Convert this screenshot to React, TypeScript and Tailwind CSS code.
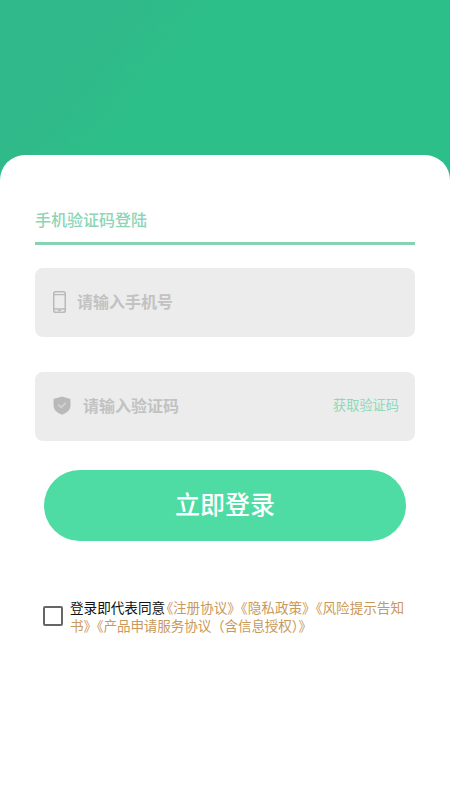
const CJK = "font-['Noto_Sans_CJK_SC','Noto_Sans',sans-serif]";

function PhoneIcon() {
  return (
    <svg width="13" height="22" viewBox="0 0 13 22" fill="none" className="shrink-0">
      <rect x="0.75" y="0.75" width="11.5" height="20.5" rx="1.8" stroke="#b9b9b9" strokeWidth="1.5" />
      <path d="M1 3.6h11M1 18h11" stroke="#b9b9b9" strokeWidth="1.3" />
      <rect x="5" y="18.8" width="3" height="1.2" fill="#b9b9b9" />
    </svg>
  );
}

function ShieldIcon() {
  return (
    <svg width="18" height="19" viewBox="0 0 18 19" className="shrink-0">
      <path d="M9 0.5 L17.5 3 V9.5 C17.5 14 13.5 17 9 18.8 C4.5 17 0.5 14 0.5 9.5 V3 Z" fill="#b9b9b9" />
      <path d="M5.4 8.8 L8.2 11.4 L12.8 6.8" fill="none" stroke="#d4d4d4" strokeWidth="1.6" />
    </svg>
  );
}

export default function App() {
  return (
    <div className={`${CJK} w-[450px] h-[800px] overflow-hidden flex flex-col pt-[155px] bg-[linear-gradient(128deg,#30b98a_0%,#30ba8a_14%,#2dbf89_20%,#2dbf89_60%,#2fbb88_72%,#30b789_100%)]`}>
      <div className="flex-1 bg-white rounded-t-[25px] px-[35px] flex flex-col">
        {/* Tab */}
        <div className="h-[90px] border-b-[3px] border-[#86d3b2] flex items-end pb-[11px]">
          <span className="text-[16px] leading-[24px] font-medium text-[#8dd5b5]">手机验证码登陆</span>
        </div>

        {/* Inputs */}
        <div className="mt-[23px] h-[69px] rounded-[8px] bg-[#ececec] flex items-center pl-[18px] pb-[2px]">
          <PhoneIcon />
          <span className="ml-[11px] mb-[2px] text-[16px] font-bold text-[#c2c2c2]">请输入手机号</span>
        </div>
        <div className="mt-[35px] h-[69px] rounded-[8px] bg-[#ececec] flex items-center pl-[18px] pr-[16px] pb-[2px]">
          <ShieldIcon />
          <span className="ml-[12px] mb-[2px] text-[16px] font-bold text-[#c2c2c2]">请输入验证码</span>
          <span className="ml-auto mb-[2px] text-[13.2px] text-[#8dd8b7]">获取验证码</span>
        </div>

        {/* Submit */}
        <button className="mt-[29px] mx-[9px] h-[71px] pb-[3px] rounded-full bg-[#4edca4] text-white text-[25px] font-medium">
          立即登录
        </button>

        {/* Agreement */}
        <div className="mt-[57px] ml-[8px] flex items-start">
          <div className="mt-[8px] w-[20px] h-[20px] shrink-0 rounded-[2px] border-2 border-[#666666]" />
          <div className="ml-[7px] w-[340px] text-[13.6px] leading-[18px] text-[#111111]">
            <p className="whitespace-nowrap">
              登录即代表同意
              <span className="ml-[1px] text-[#c9995c] [font-feature-settings:'palt']">《</span>
              <span className="text-[#c9995c]">注册协议》《隐私政策》《风险提示告知</span>
            </p>
            <p className="whitespace-nowrap tracking-[-0.15px] text-[#c9995c]">书》《产品申请服务协议（含信息授权）》</p>
          </div>
        </div>
      </div>
    </div>
  );
}
